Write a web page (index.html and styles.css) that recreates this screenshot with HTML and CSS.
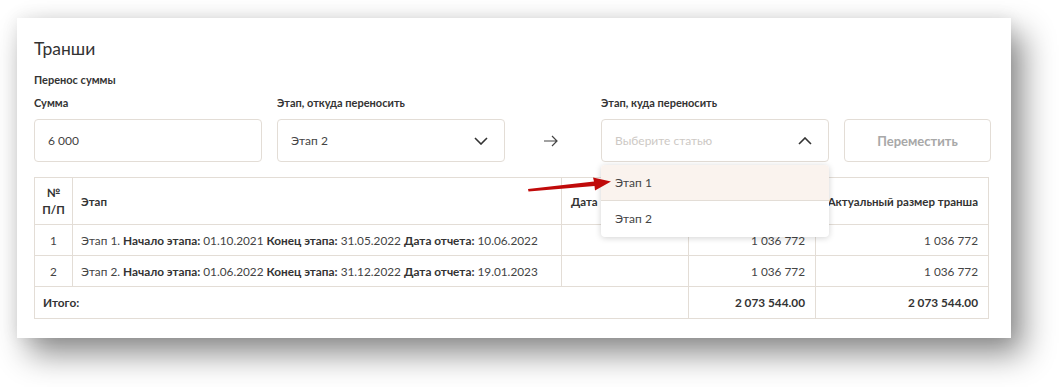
FILE: index.html
```html
<!DOCTYPE html>
<html lang="ru">
<head>
  <meta charset="UTF-8" />
  <title>Транши</title>
  <link rel="stylesheet" href="styles.css">
</head>
<body>
  <div class="card">
    <h1 class="title">Транши</h1>
    <div class="subtitle">Перенос суммы</div>

    <div class="form">
      <label class="label">Сумма</label>
      <label class="label">Этап, откуда переносить</label>
      <span></span>
      <label class="label">Этап, куда переносить</label>
      <span></span>

      <div class="field">6 000</div>
      <div class="field select">
        <span>Этап 2</span>
        <svg class="chevron" width="14" height="8" viewBox="0 0 14 8"><path d="M1 1l6 6 6-6" fill="none" stroke="#333" stroke-width="1.6"/></svg>
      </div>
      <div class="arrow">
        <svg width="16" height="12" viewBox="0 0 16 12"><path d="M1 6h13M9 1l5 5-5 5" fill="none" stroke="#444" stroke-width="1.2"/></svg>
      </div>
      <div class="field select open">
        <span class="placeholder">Выберите статью</span>
        <svg class="chevron" width="14" height="8" viewBox="0 0 14 8"><path d="M1 7l6-6 6 6" fill="none" stroke="#333" stroke-width="1.6"/></svg>
        <ul class="dropdown">
          <li class="active">Этап 1</li>
          <li>Этап 2</li>
        </ul>
      </div>
      <button class="btn">Переместить</button>
    </div>

    <table class="tranches">
      <thead>
        <tr>
          <th class="num">№<br>П/П</th>
          <th class="left">Этап</th>
          <th class="left">Дата</th>
          <th>Плановый размер</th>
          <th>Актуальный размер транша</th>
        </tr>
      </thead>
      <tbody>
        <tr>
          <td class="num">1</td>
          <td class="left">Этап 1. <b>Начало этапа:</b> 01.10.2021 <b>Конец этапа:</b> 31.05.2022 <b>Дата отчета:</b> 10.06.2022</td>
          <td></td>
          <td>1 036 772</td>
          <td>1 036 772</td>
        </tr>
        <tr>
          <td class="num">2</td>
          <td class="left">Этап 2. <b>Начало этапа:</b> 01.06.2022 <b>Конец этапа:</b> 31.12.2022 <b>Дата отчета:</b> 19.01.2023</td>
          <td></td>
          <td>1 036 772</td>
          <td>1 036 772</td>
        </tr>
        <tr class="total">
          <td colspan="3" class="left">Итого:</td>
          <td>2 073 544.00</td>
          <td>2 073 544.00</td>
        </tr>
      </tbody>
    </table>

    <svg class="pointer" width="90" height="20" viewBox="0 0 90 20">
      <polygon points="0,14 66,6.5 65,2.5 83,6.5 67,15.5 66.5,11 0.5,16.5" fill="#c00a0a"/>
    </svg>
  </div>
</body>
</html>
```

FILE: styles.css
```css
* {
  box-sizing: border-box;
  margin: 0;
  padding: 0;
}
html,
body {
  height: 100%;
}
body {
  background: #ffffff;
  font-family: Lato, 'Open Sans', sans-serif;
  color: #333;
  font-size: 12px;
  padding-top: 18px;
  padding-left: 17px;
  overflow: hidden;
}
.card {
  position: relative;
  width: 994px;
  height: 320px;
  padding: 21px 20px 0 17px;
  background: #fff;
  box-shadow: 12px 16px 30px rgba(0,0,0,0.45), 0 0 16px rgba(0,0,0,0.08);
}
.title {
  font-size: 17.5px;
  font-weight: 400;
  line-height: 20px;
  color: #333;
}
.subtitle {
  margin-top: 13px;
  font-size: 11px;
  font-weight: bold;
  line-height: 16px;
}
.form {
  display: grid;
  grid-template-columns: 228px 228px 66px 228px 147px;
  column-gap: 15px;
  row-gap: 8px;
  margin-top: 7px;
}
.label {
  font-size: 11px;
  font-weight: bold;
  line-height: 16px;
}
.field {
  position: relative;
  height: 43px;
  border: 1px solid #e3ddd6;
  border-radius: 4px;
  padding: 0 13px;
  display: flex;
  align-items: center;
  font-size: 12px;
  color: #444;
}
.select {
  justify-content: space-between;
  padding-right: 16px;
}
.placeholder {
  color: #cdc9c5;
}
.arrow {
  display: flex;
  align-items: center;
  justify-content: center;
  padding-right: 4px;
}
.dropdown {
  position: absolute;
  top: 45px;
  left: -1px;
  width: 228px;
  list-style: none;
  background: #fff;
  border-radius: 4px;
  box-shadow: 0 1px 6px rgba(0,0,0,0.18);
  z-index: 10;
  overflow: hidden;
}
.dropdown li {
  height: 36px;
  line-height: 36px;
  padding-left: 14px;
  font-size: 12px;
  color: #444;
}
.dropdown li.active {
  background: #faf3ee;
  border-bottom: 1px solid #e3ddd6;
}
.btn {
  height: 43px;
  border: 1px solid #e3ddd6;
  border-radius: 4px;
  background: #fff;
  font-family: inherit;
  font-size: 13px;
  font-weight: bold;
  color: #a8a8a8;
}
.tranches {
  margin-top: 15px;
  width: 955px;
  border-collapse: collapse;
  font-size: 11.8px;
}
.tranches th,
.tranches td {
  border: 1px solid #e3ddd6;
  padding: 0 10px;
  text-align: right;
  color: #444;
}
.tranches th {
  height: 47px;
  font-weight: bold;
  font-size: 11.5px;
  color: #333;
}
.tranches td {
  height: 31px;
}
.tranches .num {
  width: 38px;
  padding: 0;
  text-align: center;
  line-height: 17px;
}
.tranches .left {
  text-align: left;
  padding-left: 8px;
}
.tranches th:nth-child(2) { width: 489px; }
.tranches th:nth-child(3) { width: 127px; padding-left: 9px; }
.tranches th:nth-child(4) { width: 127px; }
.tranches b { color: #333; }
.tranches .total td {
  font-weight: bold;
  color: #333;
  height: 32px;
}
.pointer {
  position: absolute;
  left: 511px;
  top: 157px;
  z-index: 20;
}
```
